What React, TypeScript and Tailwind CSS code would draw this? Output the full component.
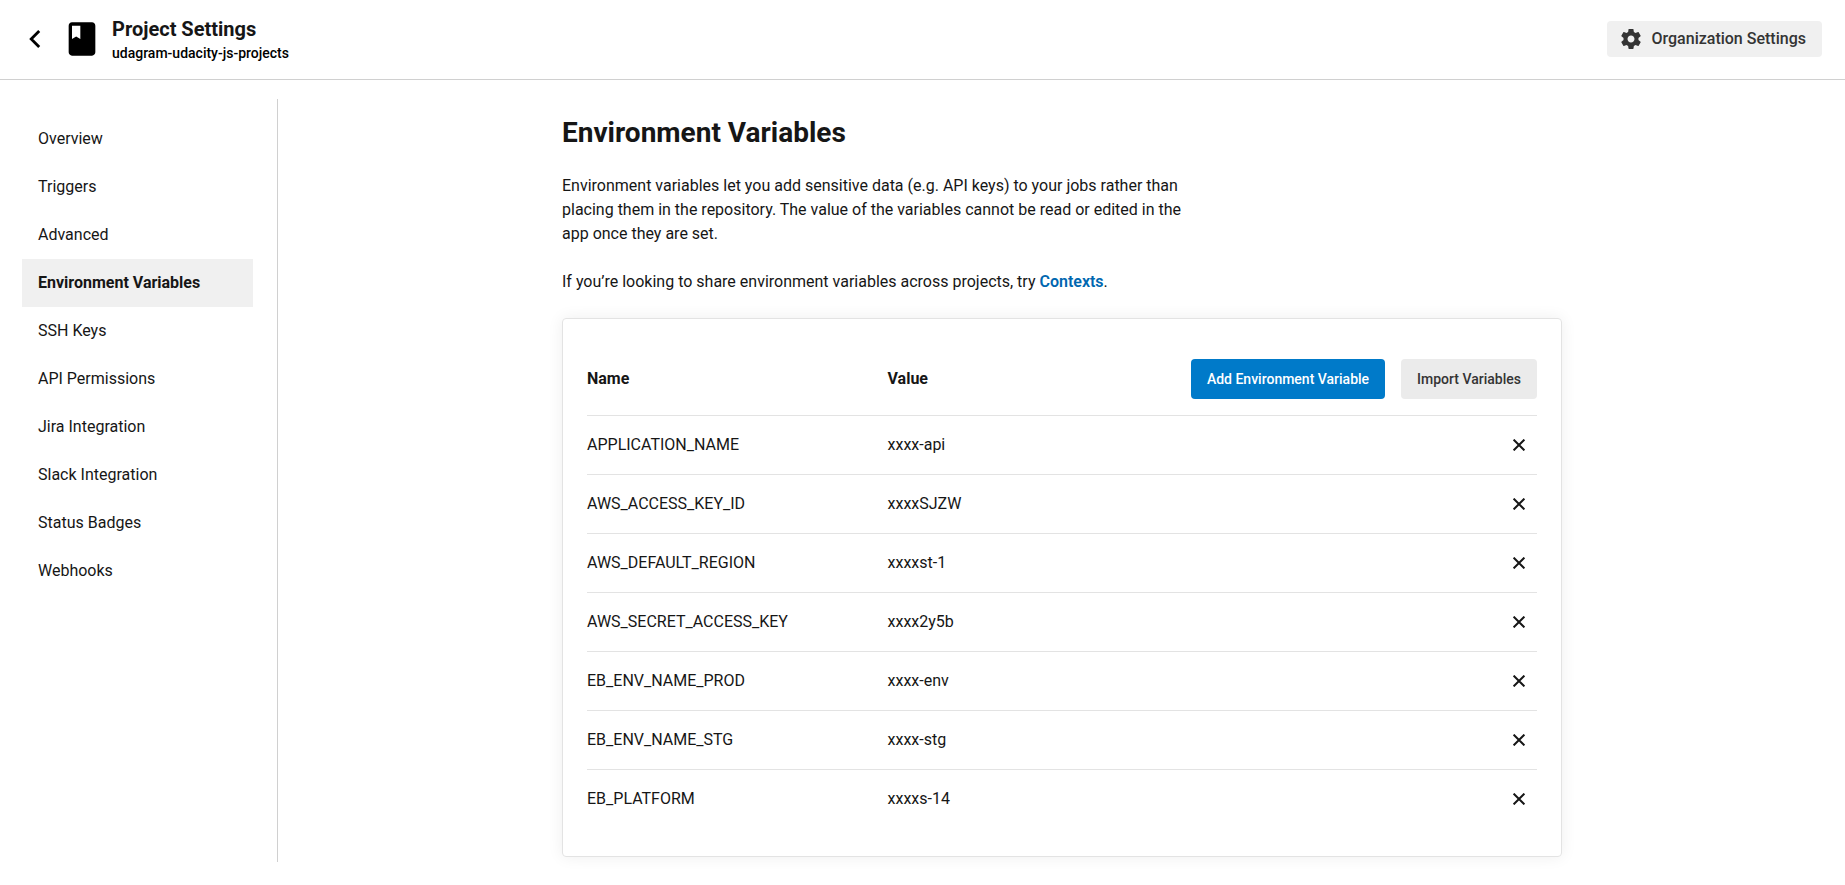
const NAV = [
  'Overview',
  'Triggers',
  'Advanced',
  'Environment Variables',
  'SSH Keys',
  'API Permissions',
  'Jira Integration',
  'Slack Integration',
  'Status Badges',
  'Webhooks',
];

const VARIABLES = [
  ['APPLICATION_NAME', 'xxxx-api'],
  ['AWS_ACCESS_KEY_ID', 'xxxxSJZW'],
  ['AWS_DEFAULT_REGION', 'xxxxst-1'],
  ['AWS_SECRET_ACCESS_KEY', 'xxxx2y5b'],
  ['EB_ENV_NAME_PROD', 'xxxx-env'],
  ['EB_ENV_NAME_STG', 'xxxx-stg'],
  ['EB_PLATFORM', 'xxxxs-14'],
];

function BackIcon() {
  return (
    <svg width="12" height="20" viewBox="0 0 12 20" fill="none" stroke="#000" strokeWidth="2.8">
      <path d="M10.2 1.9 2.2 10l8 8.1" />
    </svg>
  );
}

function BookIcon() {
  return (
    <svg width="40" height="40" viewBox="0 0 24 24" fill="#000">
      <path d="M18 2H6c-1.1 0-2 .9-2 2v16c0 1.1.9 2 2 2h12c1.1 0 2-.9 2-2V4c0-1.1-.9-2-2-2zM6 4h5v8l-2.5-1.5L6 12V4z" />
    </svg>
  );
}

function GearIcon() {
  return (
    <svg width="24" height="24" viewBox="0 0 24 24" fill="#343434">
      <path d="M19.43 12.98c.04-.32.07-.64.07-.98s-.03-.66-.07-.98l2.11-1.65c.19-.15.24-.42.12-.64l-2-3.46c-.12-.22-.39-.3-.61-.22l-2.49 1c-.52-.4-1.08-.73-1.69-.98l-.38-2.65C14.46 2.18 14.25 2 14 2h-4c-.25 0-.46.18-.49.42l-.38 2.65c-.61.25-1.17.59-1.69.98l-2.49-1c-.23-.09-.49 0-.61.22l-2 3.46c-.13.22-.07.49.12.64l2.11 1.65c-.04.32-.07.65-.07.98s.03.66.07.98l-2.11 1.65c-.19.15-.24.42-.12.64l2 3.46c.12.22.39.3.61.22l2.49-1c.52.4 1.08.73 1.69.98l.38 2.65c.03.24.24.42.49.42h4c.25 0 .46-.18.49-.42l.38-2.65c.61-.25 1.17-.59 1.69-.98l2.49 1c.23.09.49 0 .61-.22l2-3.46c.12-.22.07-.49-.12-.64l-2.11-1.65zM12 15.5c-1.93 0-3.5-1.57-3.5-3.5s1.57-3.5 3.5-3.5 3.5 1.57 3.5 3.5-1.57 3.5-3.5 3.5z" />
    </svg>
  );
}

function CloseIcon() {
  return (
    <svg width="12" height="12" viewBox="0 0 12 12" fill="none" stroke="#161616" strokeWidth="2">
      <path d="M.6.6l10.8 10.8M11.4.6.6 11.4" />
    </svg>
  );
}

export default function App() {
  return (
    <div className="h-[885px] overflow-hidden bg-white font-[Roboto,sans-serif] text-base text-[#161616]">
      <header className="flex h-20 items-center justify-between border-b border-[#d0d0d0] pr-[23px] pb-px pl-[29px]">
        <div className="flex items-center">
          <button aria-label="Back">
            <BackIcon />
          </button>
          <div className="ml-[21px]">
            <BookIcon />
          </div>
          <div className="ml-[10px] pt-1">
            <h1 className="text-xl leading-6 font-bold">Project Settings</h1>
            <p className="text-sm leading-6 font-medium text-black">udagram-udacity-js-projects</p>
          </div>
        </div>
        <button className="flex h-9 w-[215px] items-center rounded bg-[#f0f0f0] pl-3 font-medium text-[#343434]">
          <GearIcon />
          <span className="ml-[8.5px]">Organization Settings</span>
        </button>
      </header>

      <div className="flex">
        <nav className="mt-[19px] h-[763px] w-[278px] border-r border-[#d0d0d0] pt-4 pr-6 pl-[22px]">
          <ul>
            {NAV.map((item) => (
              <li
                key={item}
                className={
                  item === 'Environment Variables'
                    ? 'flex h-12 items-center bg-[#f0f0f0] pl-4 font-bold'
                    : 'flex h-12 items-center pl-4'
                }
              >
                {item}
              </li>
            ))}
          </ul>
        </nav>

        <main className="ml-[284px] w-[1000px] pt-[33px]">
          <h2 className="text-[28px] leading-10 font-bold">Environment Variables</h2>
          <p className="mt-[21px] w-[640px] leading-6">
            Environment variables let you add sensitive data (e.g. API keys) to your jobs rather than
            placing them in the repository. The value of the variables cannot be read or edited in the
            app once they are set.
          </p>
          <p className="mt-6 leading-6">
            If you’re looking to share environment variables across projects, try{' '}
            <a className="font-semibold text-[#0067b0]">Contexts</a>.
          </p>

          <section className="mt-6 h-[539px] rounded border border-[#e3e3e3] px-6 pt-10 shadow-[0_0_16px_rgba(0,0,0,0.07)]">
            <div className="flex h-[57px] border-b border-[#e3e3e3] font-bold">
              <span className="w-[300.5px] leading-10">Name</span>
              <span className="leading-10">Value</span>
              <div className="ml-auto flex gap-4 text-sm font-medium">
                <button className="h-10 w-[194px] rounded bg-[#007ac9] text-white">
                  Add Environment Variable
                </button>
                <button className="h-10 w-[136px] rounded bg-[#ebebeb] text-[#343434]">
                  Import Variables
                </button>
              </div>
            </div>
            {VARIABLES.map(([name, value]) => (
              <div
                key={name}
                className="flex h-[59px] items-center border-b border-[#e3e3e3] pr-3 last:border-transparent"
              >
                <span className="w-[300.5px]">{name}</span>
                <span>{value}</span>
                <button aria-label={`Remove ${name}`} className="ml-auto">
                  <CloseIcon />
                </button>
              </div>
            ))}
          </section>
        </main>
      </div>
    </div>
  );
}
